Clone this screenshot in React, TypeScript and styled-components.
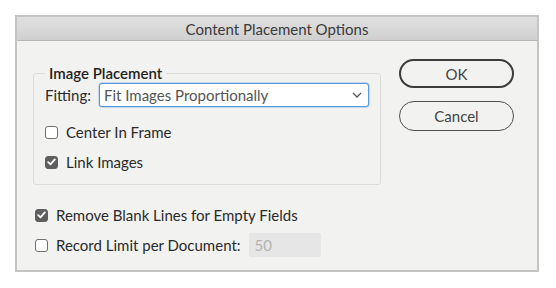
import React from "react";
import styled, { createGlobalStyle } from "styled-components";

const Global = createGlobalStyle`
  html, body { margin: 0; padding: 0; background: #ffffff; }
  body { font-family: Lato, "Liberation Sans", sans-serif; }
  * { box-sizing: border-box; }
`;

const Page = styled.div`
  padding: 15px 0 0 15px;
`;

const Dialog = styled.div`
  width: 524px;
  height: 257px;
  border: 2px solid #c4c4c4;
  background: #f2f2f1;
  display: flex;
  flex-direction: column;
`;

const TitleBar = styled.div`
  height: 24px;
  background: linear-gradient(#e0e0e0, #d0d0d0);
  border-bottom: 1px solid #b6b6b6;
  display: flex;
  align-items: center;
  justify-content: center;
  font-size: 15px;
  color: #3a3a3a;
`;

const Body = styled.div`
  padding: 18px 23px 0 16px;
  display: flex;
  flex-direction: column;
`;

const TopRow = styled.div`
  display: flex;
  gap: 18px;
`;

const Group = styled.fieldset`
  margin: 5px 0 0 0;
  width: 348px;
  height: 121px;
  padding: 1px 11px 0 11px;
  border: 1px solid #dcdcdc;
  border-radius: 3px;
  display: flex;
  flex-direction: column;
`;

const Legend = styled.legend`
  padding: 0 4px;
  margin-left: 0;
  font-size: 15px;
  line-height: 18px;
  font-weight: 600;
  color: #222;
`;

const FieldRow = styled.div`
  display: flex;
  align-items: center;
  gap: 8px;
  height: 24px;
`;

const Label = styled.span`
  font-size: 15px;
  color: #2a2a2a;
  white-space: nowrap;
`;

const Select = styled.div`
  flex: 1;
  height: 24px;
  background: #fff;
  border: 1px solid #5a98dc;
  border-radius: 3px;
  box-shadow: 0 0 0 0.5px #8fb8e6;
  display: flex;
  align-items: center;
  justify-content: space-between;
  padding: 0 6px 0 4px;
  font-size: 15px;
  color: #555;
`;

const CheckRow = styled.label<{ $mt: number }>`
  display: flex;
  align-items: center;
  gap: 8px;
  height: 20px;
  margin-top: ${(p) => p.$mt}px;
  font-size: 15px;
  color: #2a2a2a;
`;

const Box = styled.span<{ $on?: boolean }>`
  width: 13px;
  height: 13px;
  border-radius: 3px;
  border: 1px solid ${(p) => (p.$on ? "#5f5f5f" : "#707070")};
  background: ${(p) => (p.$on ? "#5f5f5f" : "#fff")};
  display: flex;
  align-items: center;
  justify-content: center;
  flex: none;
`;

const Buttons = styled.div`
  display: flex;
  flex-direction: column;
  gap: 13px;
`;

const Button = styled.button<{ $primary?: boolean }>`
  width: 115px;
  height: ${(p) => (p.$primary ? 29 : 30)}px;
  border-radius: 15px;
  border: ${(p) => (p.$primary ? "2px solid #3c3c3c" : "1px solid #505050")};
  background: #f2f2f1;
  font-family: inherit;
  font-size: 15px;
  color: #444;
  padding: 0;
`;

const Bottom = styled.div`
  margin-left: 2px;
  display: flex;
  flex-direction: column;
`;

const InlineRow = styled.div`
  display: flex;
  align-items: center;
  height: 24px;
  margin-top: 8px;
  gap: 8px;
`;

const NumberBox = styled.div`
  width: 72px;
  height: 24px;
  background: #e6e6e6;
  border-radius: 2px;
  display: flex;
  align-items: center;
  padding-left: 6px;
  font-size: 15px;
  color: #b3b3b3;
`;

const Check = () => (
  <svg width="9" height="8" viewBox="0 0 9 8">
    <path d="M1.2 4.2 L3.5 6.4 L7.8 1.4" fill="none" stroke="#fff" strokeWidth="1.8" strokeLinecap="round" strokeLinejoin="round" />
  </svg>
);

const Chevron = () => (
  <svg width="10" height="6" viewBox="0 0 10 6">
    <path d="M1 1 L5 5 L9 1" fill="none" stroke="#555" strokeWidth="1.3" />
  </svg>
);

export default function App() {
  return (
    <>
      <Global />
      <Page>
        <Dialog>
          <TitleBar>Content Placement Options</TitleBar>
          <Body>
            <TopRow>
              <Group>
                <Legend>Image Placement</Legend>
                <FieldRow>
                  <Label>Fitting:</Label>
                  <Select>
                    <span>Fit Images Proportionally</span>
                    <Chevron />
                  </Select>
                </FieldRow>
                <CheckRow $mt={15}>
                  <Box />
                  Center In Frame
                </CheckRow>
                <CheckRow $mt={10}>
                  <Box $on>
                    <Check />
                  </Box>
                  Link Images
                </CheckRow>
              </Group>
              <Buttons>
                <Button $primary>OK</Button>
                <Button>Cancel</Button>
              </Buttons>
            </TopRow>
            <Bottom>
              <CheckRow $mt={20}>
                <Box $on>
                  <Check />
                </Box>
                Remove Blank Lines for Empty Fields
              </CheckRow>
              <InlineRow>
                <Box />
                <Label>Record Limit per Document:</Label>
                <NumberBox>50</NumberBox>
              </InlineRow>
            </Bottom>
          </Body>
        </Dialog>
      </Page>
    </>
  );
}
